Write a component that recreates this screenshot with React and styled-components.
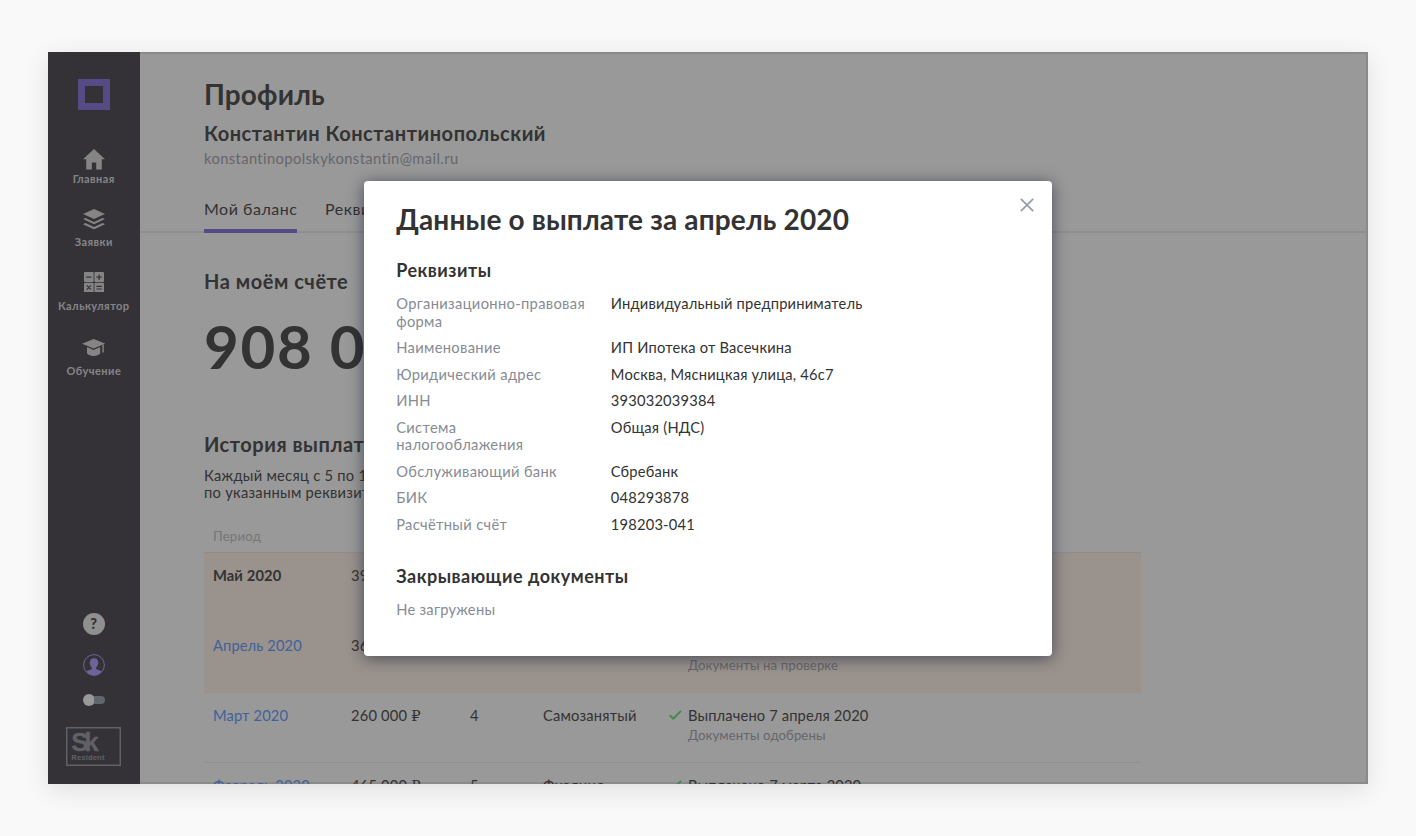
import React from "react";
import styled, { createGlobalStyle } from "styled-components";

const Global = createGlobalStyle`
  *, *::before, *::after { box-sizing: border-box; }
  body {
    margin: 0;
    background: #f9f9f9;
    color: #555;
    font-family: Lato, "Open Sans", sans-serif;
    font-size: 14.7px;
    letter-spacing: 0.2px;
    -webkit-font-smoothing: antialiased;
  }
  h1, h2, h3, p, dl, dt, dd { margin: 0; }
`;

const Page = styled.div`
  width: 1416px;
  height: 836px;
  padding: 52px 48px;
`;

const AppFrame = styled.div`
  position: relative;
  display: flex;
  width: 1320px;
  height: 732px;
  overflow: hidden;
  background: #fff;
`;

const FrameShadow = styled.div`
  box-shadow: 0 6px 24px rgba(0, 0, 0, 0.11);
`;

const Sidebar = styled.aside`
  display: flex;
  flex-direction: column;
  align-items: center;
  flex: none;
  width: 91.6px;
  padding: 27px 0 18px;
  background: #57535d;
  color: #dedede;
`;

const Logo = styled.div`
  width: 31.5px;
  height: 31px;
  border: 7.5px solid #8f7ddc;
`;

const Nav = styled.nav`
  margin-top: 11.5px;
`;

const NavItem = styled.a`
  display: flex;
  flex-direction: column;
  align-items: center;
  justify-content: flex-end;
  height: ${(p) => p.$height}px;
  gap: ${(p) => p.$gap}px;
  svg { display: block; }
`;

const NavLabel = styled.span`
  font-size: 11px;
  line-height: 14px;
  font-weight: 700;
  letter-spacing: 0.46px;
`;

const SideFooter = styled.div`
  display: flex;
  flex-direction: column;
  align-items: center;
  margin-top: auto;
  svg { display: block; }
`;

const Help = styled.div`
  width: 22px;
  height: 22px;
  border-radius: 50%;
  background: #eee;
  color: #57535d;
  font-size: 14.5px;
  font-weight: 900;
  line-height: 22px;
  text-align: center;
`;

const Account = styled.div`
  margin: 18.4px 0 18.8px;
`;

const Toggle = styled.div`
  display: flex;
  align-items: center;
  width: 22px;
  height: 12px;
  &::before {
    content: "";
    flex: none;
    width: 12px;
    height: 12px;
    border-radius: 50%;
    background: #fff;
  }
  &::after {
    content: "";
    flex: 1;
    height: 8px;
    margin-left: -1px;
    border-radius: 0 4px 4px 0;
    background: #9eaab4;
  }
`;

const Resident = styled.div`
  width: 55px;
  height: 39.4px;
  margin-top: 20.2px;
  padding: 4px 0 0 4px;
  border: 1.5px solid #a0a0aa;
  box-shadow: inset 0 0 0 0.5px #a0a0aa;
  color: #a0a0aa;
  font-family: "Liberation Sans", Arial, sans-serif;
  font-weight: 700;
`;

const ResidentMark = styled.div`
  font-size: 26px;
  line-height: 21px;
  letter-spacing: -4.5px;
  -webkit-text-stroke: 0.3px #a0a0aa;
`;

const ResidentName = styled.div`
  margin-top: 1px;
  font-size: 7.6px;
  line-height: 8px;
  letter-spacing: 0.15px;
`;

const Main = styled.main`
  flex: 1;
  min-width: 0;
  padding-top: 25px;
  box-shadow: inset 0 2px #e6e6e6, inset -2px -2px #e6e6e6;
  overflow: hidden;
`;

const Header = styled.header`
  padding-left: 64.4px;
`;

const Title = styled.h1`
  font-size: 28px;
  line-height: 34px;
  font-weight: 700;
  letter-spacing: 0.16px;
`;

const Subtitle = styled.h2`
  margin-top: ${(p) => p.$top}px;
  font-size: 20px;
  line-height: 24px;
  font-weight: 700;
  letter-spacing: 0.54px;
`;

const Email = styled.p`
  margin-top: 4.4px;
  line-height: 18px;
  letter-spacing: 0.4px;
  color: #aaaab0;
`;

const Tabs = styled.div`
  display: flex;
  gap: 27.6px;
  margin-top: 31.6px;
  margin-right: 2px;
  padding-left: 64.4px;
  box-shadow: inset 0 -2px #ededee;
`;

const Tab = styled.a`
  padding-bottom: 10px;
  border-bottom: 4px solid ${(p) => (p.$active ? "#8f7ddc" : "transparent")};
  font-size: 16px;
  line-height: 20px;
  letter-spacing: 0.52px;
`;

const Content = styled.div`
  width: 1001.6px;
  padding-left: 64.4px;
`;

const Balance = styled.div`
  margin-top: 22.8px;
  font-size: 60px;
  line-height: 60px;
  font-weight: 700;
  letter-spacing: 1.7px;
`;

const Note = styled.p`
  margin-top: 10.6px;
  line-height: 17.6px;
  letter-spacing: 0.28px;
`;

const TableRow = styled.div`
  display: grid;
  grid-template-columns: 138px 119px 73px 126px 1fr;
  height: 70px;
  padding: 13px 0 0 9px;
  line-height: 18px;
  background: ${(p) => (p.$pending ? "#fff4eb" : "transparent")};
  border-bottom: ${(p) => (p.$pending ? "none" : "1px solid #eff0f1")};
`;

const TableHead = styled(TableRow)`
  height: auto;
  margin-top: 25.2px;
  padding: 0 0 7px 9px;
  border-bottom: 1px solid #ebebed;
  font-size: 13.2px;
  color: #c3c5cc;
`;

const Period = styled.span`
  color: ${(p) => (p.$link ? "#6ea2ff" : "inherit")};
  font-weight: ${(p) => (p.$link ? 400 : 700)};
  letter-spacing: 0.12px;
`;

const Ruble = styled.span`
  font-family: "Liberation Serif", "DejaVu Serif", serif;
  line-height: 1;
`;

const Status = styled.div`
  display: grid;
  grid-template-columns: 19px 1fr;
  align-content: start;
  letter-spacing: 0.14px;
  svg { margin-top: 4px; }
`;

const StatusNote = styled.span`
  grid-column: 2;
  margin-top: 2px;
  font-size: 13.2px;
  letter-spacing: 0.08px;
  color: #aaabb4;
`;

const Backdrop = styled.div`
  position: absolute;
  inset: 0;
  display: grid;
  place-items: center;
  background: rgba(0, 0, 0, 0.4);
`;

const Dialog = styled.section`
  position: relative;
  width: 688px;
  height: 475px;
  padding: 21px 32.2px;
  border-radius: 4px;
  background: #fff;
  color: #333;
  box-shadow: 0 2px 16px rgba(20, 25, 45, 0.6);
`;

const CloseButton = styled.button`
  position: absolute;
  top: 17.6px;
  right: 18.2px;
  padding: 0;
  border: 0;
  background: none;
  line-height: 0;
`;

const DialogSection = styled.h3`
  margin-top: ${(p) => p.$top}px;
  font-size: 18px;
  line-height: 22px;
  font-weight: 700;
  letter-spacing: 0.5px;
`;

const Details = styled.dl`
  display: grid;
  grid-template-columns: 214.6px 1fr;
  row-gap: 8.9px;
  margin-top: 14.3px;
  line-height: 17.6px;
`;

const Term = styled.dt`
  color: #868b94;
  letter-spacing: 0.34px;
  white-space: pre-line;
`;

const Empty = styled.p`
  margin-top: 14.4px;
  line-height: 17.6px;
  letter-spacing: 0.26px;
  color: #868b94;
`;

const HomeIcon = () => (
  <svg width="22" height="20.5" viewBox="0 0 22 20.5" fill="currentColor">
    <path d="M11 0 22 10.3H18.8V20.5H13.2V13.6H8.8V20.5H3.2V10.3H0Z" />
  </svg>
);
const LayersIcon = () => (
  <svg width="22" height="20.4" viewBox="0 0 22 20.4" fill="currentColor">
    <path d="M11 0 22 5 11 10 0 5ZM2.4 8.9 11 12.9 19.6 8.9 22 10 11 15.2 0 10ZM2.4 14.1 11 18.1 19.6 14.1 22 15.2 11 20.4 0 15.2Z" />
  </svg>
);
const CalculatorIcon = () => (
  <svg width="20" height="20.6" viewBox="0 0 20 20.6">
    <g fill="currentColor">
      <rect width="9.6" height="9.9" rx="1" />
      <rect x="10.4" width="9.6" height="9.9" rx="1" />
      <rect y="10.7" width="9.6" height="9.9" rx="1" />
      <rect x="10.4" y="10.7" width="9.6" height="9.9" rx="1" />
    </g>
    <path
      d="M2.2 5.2H7.4M12.4 5.2H17.8M15.1 2.5V7.9M2.7 13.4 7 17.7M7 13.4 2.7 17.7M12.4 14.3H17.8M12.4 17H17.8"
      stroke="#57535d"
      strokeWidth="1.2"
    />
  </svg>
);
const StudyIcon = () => (
  <svg width="23.4" height="17" viewBox="0 0 23.4 17" fill="currentColor">
    <path d="M11.7 0 23.4 4.7 11.7 9.6 0 4.7ZM5 8.1 11.7 10.9 18.2 8.1V14.2C16 17.9 7.2 17.9 5 14.2ZM20.4 6.2 21.8 5.6V13.6H20.4Z" />
  </svg>
);
const UserIcon = () => (
  <svg width="22" height="22" viewBox="0 0 22 22">
    <circle cx="11" cy="11" r="10.4" fill="none" stroke="#b9a3ff" strokeWidth="1" />
    <path
      d="M11 4.2C13.8 4.2 15.3 6 15.1 8.5 15.6 8.8 15.3 10.6 14.6 10.9 14.3 12.2 13.7 13 13.2 13.4V14.9C15 16 17.5 16.2 18.9 17.6 15 22.4 7 22.4 3.1 17.6 4.5 16.2 7 16 8.8 14.9V13.4C8.3 13 7.7 12.2 7.4 10.9 6.7 10.6 6.4 8.8 6.9 8.5 6.7 6 8.2 4.2 11 4.2Z"
      fill="#b9a3ff"
    />
  </svg>
);
const CheckIcon = () => (
  <svg width="13" height="10" viewBox="0 0 13 10">
    <path d="M.8 5.2 4.3 8.6 12 .9" fill="none" stroke="#71df7b" strokeWidth="1.9" />
  </svg>
);
const CloseIcon = () => (
  <svg width="14" height="14" viewBox="0 0 14 14">
    <path d="M.8.8 13.2 13.2M13.2.8.8 13.2" stroke="#989ea9" strokeWidth="1.8" />
  </svg>
);

const navItems = [
  { label: "Главная", icon: <HomeIcon />, height: 64, gap: 1.9 },
  { label: "Заявки", icon: <LayersIcon />, height: 63.3, gap: 5.6 },
  { label: "Калькулятор", icon: <CalculatorIcon />, height: 64, gap: 6.6 },
  { label: "Обучение", icon: <StudyIcon />, height: 65, gap: 7.4 },
];

const payouts = [
  { period: "Май 2020", amount: "390 000", deals: "6", type: "ИП", pending: true, current: true },
  { period: "Апрель 2020", amount: "360 000", deals: "5", type: "ИП", status: "Ожидает выплаты", note: "Документы на проверке", pending: true },
  { period: "Март 2020", amount: "260 000", deals: "4", type: "Самозанятый", status: "Выплачено 7 апреля 2020", note: "Документы одобрены", paid: true },
  { period: "Февраль 2020", amount: "465 000", deals: "5", type: "Физлицо", status: "Выплачено 7 марта 2020", note: "Документы одобрены", paid: true },
];

const details = [
  ["Организационно-правовая\nформа", "Индивидуальный предприниматель"],
  ["Наименование", "ИП Ипотека от Васечкина"],
  ["Юридический адрес", "Москва, Мясницкая улица, 46с7"],
  ["ИНН", "393032039384"],
  ["Система\nналогооблажения", "Общая (НДС)"],
  ["Обслуживающий банк", "Сбребанк"],
  ["БИК", "048293878"],
  ["Расчётный счёт", "198203-041"],
];

export default function App() {
  return (
    <Page>
      <Global />
      <FrameShadow>
        <AppFrame>
          <Sidebar>
            <Logo />
            <Nav>
              {navItems.map((item) => (
                <NavItem key={item.label} $height={item.height} $gap={item.gap}>
                  {item.icon}
                  <NavLabel>{item.label}</NavLabel>
                </NavItem>
              ))}
            </Nav>
            <SideFooter>
              <Help>?</Help>
              <Account><UserIcon /></Account>
              <Toggle />
              <Resident>
                <ResidentMark>Sk</ResidentMark>
                <ResidentName>Resident</ResidentName>
              </Resident>
            </SideFooter>
          </Sidebar>
          <Main>
            <Header>
              <Title>Профиль</Title>
              <Subtitle $top={10}>Константин Константинопольский</Subtitle>
              <Email>konstantinopolskykonstantin@mail.ru</Email>
            </Header>
            <Tabs>
              <Tab $active>Мой баланс</Tab>
              <Tab>Реквизиты</Tab>
            </Tabs>
            <Content>
              <Subtitle $top={36}>На моём счёте</Subtitle>
              <Balance>908 000 ₽</Balance>
              <Subtitle $top={56.2}>История выплат</Subtitle>
              <Note>
                Каждый месяц с 5 по 15 число мы выплачиваем деньги
                <br />
                по указанным реквизитам
              </Note>
              <TableHead><span>Период</span></TableHead>
              {payouts.map((row) => (
                <TableRow key={row.period} $pending={row.pending}>
                  <Period $link={!row.current}>{row.period}</Period>
                  <span>{row.amount} <Ruble>₽</Ruble></span>
                  <span>{row.deals}</span>
                  <span>{row.type}</span>
                  <Status>
                    {row.paid ? <CheckIcon /> : <span />}
                    <span>{row.status || "\u00a0"}</span>
                    <StatusNote>{row.note}</StatusNote>
                  </Status>
                </TableRow>
              ))}
            </Content>
          </Main>
          <Backdrop>
            <Dialog>
              <CloseButton aria-label="Закрыть"><CloseIcon /></CloseButton>
              <Title>Данные о выплате за апрель 2020</Title>
              <DialogSection $top={23.5}>Реквизиты</DialogSection>
              <Details>
                {details.map(([term, value]) => (
                  <React.Fragment key={term}>
                    <Term>{term}</Term>
                    <dd>{value}</dd>
                  </React.Fragment>
                ))}
              </Details>
              <DialogSection $top={31.4}>Закрывающие документы</DialogSection>
              <Empty>Не загружены</Empty>
            </Dialog>
          </Backdrop>
        </AppFrame>
      </FrameShadow>
    </Page>
  );
}
